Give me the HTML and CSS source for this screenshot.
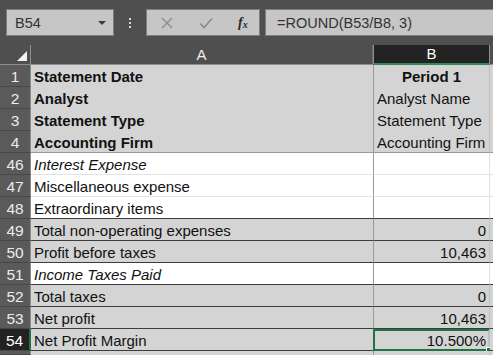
FILE: index.html
```html
<!DOCTYPE html>
<html>
<head>
<meta charset="utf-8">
<link rel="stylesheet" href="styles.css">
</head>
<body>
<div class="app">
  <div class="toolbar">
    <div class="namebox"><span>B54</span><span class="caret"></span></div>
    <div class="dots"><i></i><i></i><i></i></div>
    <div class="fxbox">
      <svg class="ico" width="14" height="14" viewBox="0 0 14 14"><path d="M2 2 L12 12 M12 2 L2 12" stroke="#8c8c8c" stroke-width="1.4" fill="none"/></svg>
      <svg class="ico" width="16" height="14" viewBox="0 0 16 14"><path d="M2 7.5 L6 11.5 L14 2.5" stroke="#8c8c8c" stroke-width="1.6" fill="none"/></svg>
      <span class="fx">f<sub>x</sub></span>
    </div>
    <div class="formula">=ROUND(B53/B8, 3)</div>
  </div>
  <div class="sheet">
    <div class="corner"><span class="tri"></span></div>
    <div class="colhead">A</div>
    <div class="colhead sel">B</div>
    <div class="colhead c"></div>

    <div class="rh">1</div><div class="cell g b">Statement Date</div><div class="cell g b ctr vb">Period 1</div><div class="cell g cc"></div>
    <div class="rh">2</div><div class="cell g b">Analyst</div><div class="cell g vb">Analyst Name</div><div class="cell g cc"></div>
    <div class="rh">3</div><div class="cell g b">Statement Type</div><div class="cell g vb">Statement Type</div><div class="cell g cc"></div>
    <div class="rh">4</div><div class="cell g b lt">Accounting Firm</div><div class="cell g vb lt">Accounting Firm</div><div class="cell g cc lt"></div>

    <div class="rh">46</div><div class="cell w i lw">Interest Expense</div><div class="cell w vb lw"></div><div class="cell w cc lw"></div>
    <div class="rh">47</div><div class="cell w lw">Miscellaneous expense</div><div class="cell w vb lw"></div><div class="cell w cc lw"></div>
    <div class="rh">48</div><div class="cell w dk">Extraordinary items</div><div class="cell w vb dk"></div><div class="cell w cc dk"></div>
    <div class="rh">49</div><div class="cell g dk">Total non-operating expenses</div><div class="cell g vb dk num">0</div><div class="cell g cc dk"></div>
    <div class="rh">50</div><div class="cell g dk">Profit before taxes</div><div class="cell g vb dk num">10,463</div><div class="cell g cc dk"></div>
    <div class="rh">51</div><div class="cell w i dk">Income Taxes Paid</div><div class="cell w vb dk"></div><div class="cell w cc dk"></div>
    <div class="rh">52</div><div class="cell g dk">Total taxes</div><div class="cell g vb dk num">0</div><div class="cell g cc dk"></div>
    <div class="rh">53</div><div class="cell g dk">Net profit</div><div class="cell g vb dk num">10,463</div><div class="cell g cc dk"></div>
    <div class="rh selrow">54</div><div class="cell g dk">Net Profit Margin</div><div class="cell g vb dk num active">10.500%<span class="handle"></span></div><div class="cell g cc dk"></div>
    <div class="rh"></div><div class="cell g"></div><div class="cell g vb"></div><div class="cell g cc"></div>
  </div>
</div>
</body>
</html>
```
FILE: styles.css
```css
* { box-sizing: border-box; }
html, body { margin: 0; padding: 0; }
body {
  width: 493px;
  height: 355px;
  overflow: hidden;
  background: #4f4f4f;
  font-family: "Liberation Sans", Arial, sans-serif;
}
.app { width: 493px; height: 355px; display: flex; flex-direction: column; }
.toolbar {
  height: 45px;
  display: flex;
  align-items: flex-start;
  padding-top: 9px;
  padding-left: 6px;
  background: #4f4f4f;
}
.namebox {
  width: 108px;
  height: 27px;
  background: #c6c6c6;
  border: 1px solid #7e7e7e;
  display: flex;
  align-items: center;
  justify-content: space-between;
  padding: 0 7px 0 8px;
  font-size: 14.5px;
  color: #333333;
}
.caret {
  width: 0; height: 0;
  border-left: 4px solid transparent;
  border-right: 4px solid transparent;
  border-top: 4px solid #3c3c3c;
}
.dots {
  width: 32px;
  height: 27px;
  display: flex;
  flex-direction: column;
  align-items: center;
  justify-content: center;
  gap: 2px;
}
.dots i { display: block; width: 2px; height: 2px; background: #d8d8d8; }
.fxbox {
  width: 114px;
  height: 27px;
  background: #c6c6c6;
  border: 1px solid #7e7e7e;
  display: flex;
  align-items: center;
  padding-left: 13px;
  gap: 24px;
}
.fxbox .ico { display: block; }
.fx {
  font-family: "Liberation Serif", "Times New Roman", serif;
  font-style: italic;
  font-weight: bold;
  font-size: 14px;
  color: #2a2a2a;
  margin-left: 0;
}
.fx sub { font-size: 10px; vertical-align: -1px; }
.formula {
  flex: 1;
  height: 27px;
  margin-left: 5px;
  background: #c6c6c6;
  border: 1px solid #7e7e7e;
  border-right: none;
  display: flex;
  align-items: center;
  padding-left: 11px;
  font-size: 14.5px;
  color: #333333;
}
.sheet {
  flex: 1;
  display: grid;
  grid-template-columns: 31px 342px 117px 1fr;
  grid-template-rows: 20px repeat(13, 22px) 1fr;
  font-size: 15px;
  color: #111;
}
.corner {
  background: #4f4f4f;
  border-right: 1px solid #8e8e8e;
  border-bottom: 1px solid #8e8e8e;
  position: relative;
}
.tri {
  position: absolute;
  right: 3px;
  bottom: 3px;
  width: 0; height: 0;
  border-left: 10px solid transparent;
  border-bottom: 10px solid #f2f2f2;
}
.colhead {
  background: #4f4f4f;
  color: #eeeeee;
  text-align: center;
  font-size: 15px;
  line-height: 19px;
  border-bottom: 1px solid #8e8e8e;
  border-right: 1px solid #6a6a6a;
}
.colhead.sel { background: #232323; border-bottom: 2px solid #2f8a55; color: #ffffff; border-right: 1px solid #8e8e8e; border-left: 1px solid #8e8e8e; line-height: 18px; }
.colhead.c { border-right: none; }
.rh {
  background: #5a5a5a;
  color: #ececec;
  text-align: center;
  font-size: 15.5px;
  line-height: 22px;
  border-right: 1px solid #8e8e8e;
  border-bottom: 1px solid #474747;
  padding-top: 1px;
}
.rh.selrow { background: #222222; color: #ffffff; border-right: 2px solid #217346; }
.cell {
  padding: 1px 3px 0;
  line-height: 21px;
  white-space: nowrap;
  overflow: hidden;
  position: relative;
}
.cell.g { background: #d4d4d4; }
.cell.w { background: #ffffff; }
.cell.b { font-weight: bold; }
.cell.i { font-style: italic; }
.cell.ctr { text-align: center; }
.cell.num { text-align: right; padding-right: 3px; }
.cell.vb { border-left: 1px solid #9a9a9a; border-right: 1px solid #e0e0e0; }
.cell.g.vb { border-right-color: #c0c0c0; }
.cell.lt { border-bottom: 1px solid #9a9a9a; }
.cell.lw { border-bottom: 1px solid #e2e2e2; }
.cell.dk { border-bottom: 1px solid #3c3c3c; }
.cell.cc { padding: 0; }
.cell.active {
  border: 2px solid #217346;
  line-height: 19px;
  padding-top: 0;
  padding-right: 2px;
  overflow: visible;
}
.handle {
  position: absolute;
  right: -4px;
  bottom: -4px;
  width: 6px;
  height: 6px;
  background: #217346;
  border: 1px solid #ffffff;
}
```
